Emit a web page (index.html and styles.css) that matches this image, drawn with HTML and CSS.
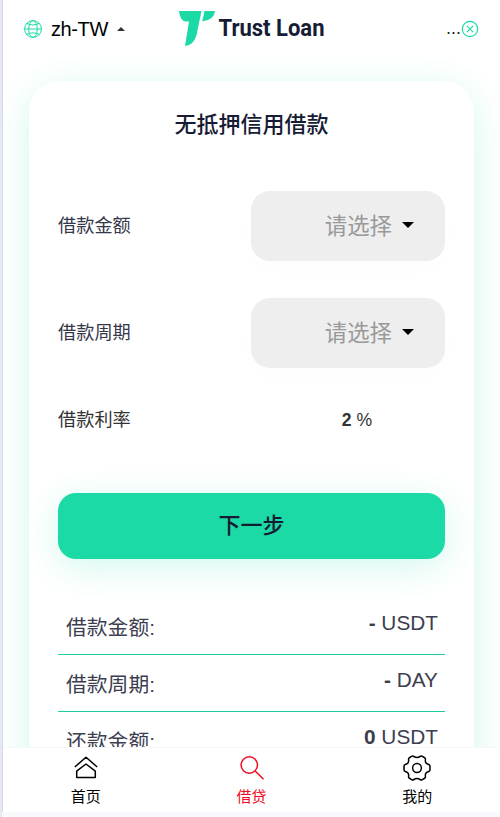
FILE: index.html
```html
<!DOCTYPE html>
<html lang="zh-CN">
<head>
  <meta charset="UTF-8" />
  <meta name="viewport" content="width=device-width, initial-scale=1.0"/>
  <title>Trust Loan</title>
  <link rel="stylesheet" href="styles.css">
</head>
<body>

<div class="app">
  <header class="topbar">
    <div class="lang">
      <svg class="globe" viewBox="0 0 18 18" width="18" height="18">
        <circle cx="9" cy="9" r="8.4"/>
        <ellipse cx="9" cy="9" rx="4.3" ry="8.4"/>
        <path d="M.6 9h16.8M2.8 3.6q6.2 3 12.4 0M2.8 14.4q6.2-3 12.4 0"/>
      </svg>
      <span class="lang-name">zh-TW</span>
      <span class="arrow-up"></span>
    </div>
    <svg class="logo" viewBox="0 0 148 38" width="148" height="38">
      <path class="mark" d="M1 1H23.5L18.5 25Q16 35 7 36L11 11.5H8Q2 11 1 1Z"/>
      <path class="mark" d="M26.5 1H37Q36 10 25 11.2H24.3Z"/>
      <text x="40.5" y="26" textLength="106" lengthAdjust="spacingAndGlyphs">Trust Loan</text>
    </svg>
    <div class="close">
      <span>...</span>
      <svg viewBox="0 0 18 18" width="18" height="18">
        <circle cx="9" cy="9" r="7.7"/>
        <path d="M5.9 5.9l6.2 6.2M12.1 5.9l-6.2 6.2"/>
      </svg>
    </div>
  </header>

  <main class="content">
    <div class="card">
      <h2>无抵押信用借款</h2>
      <div class="form-group">
        <label>借款金额</label>
        <div class="select"><span>请选择</span><i class="arrow-down"></i></div>
      </div>
      <div class="form-group">
        <label>借款周期</label>
        <div class="select"><span>请选择</span><i class="arrow-down"></i></div>
      </div>
      <div class="form-group rate">
        <label>借款利率</label>
        <div class="rate-value"><b>2</b> %</div>
      </div>
      <button class="next">下一步</button>
      <ul class="summary">
        <li><span>借款金额:</span><div><b>-</b> USDT</div></li>
        <li><span>借款周期:</span><div><b>-</b> DAY</div></li>
        <li><span>还款金额:</span><div><b>0</b> USDT</div></li>
      </ul>
    </div>
  </main>

  <nav class="tabbar">
    <a class="tab">
      <svg viewBox="0 0 28 28" width="28" height="28">
        <path d="M2.8 13L14 3.2 25.2 13M4.7 17.2L14 10l9.3 7.2v6.3H4.7z"/>
      </svg>
      <span>首页</span>
    </a>
    <a class="tab active">
      <svg viewBox="0 0 28 28" width="28" height="28">
        <circle cx="11.3" cy="11" r="8.2"/>
        <path d="M17.2 17l8.3 8.3"/>
      </svg>
      <span>借贷</span>
    </a>
    <a class="tab">
      <svg viewBox="0 0 28 28" width="28" height="28">
        <path d="M9 2.2C10.5 1.3 11 3.5 14 3.5S17.5 1.3 19 2.2L22 4C23.2 5 21.6 6.3 22.8 8.6S26.9 9.8 27 12V16C26.9 18.2 24 17.1 22.8 19.4S23.2 23 22 24L19 25.8C17.5 26.7 17 24.5 14 24.5S10.5 26.7 9 25.8L6 24C4.8 23 6.4 21.7 5.2 19.4S1.1 18.2 1 16V12C1.1 9.8 4 10.9 5.2 8.6S4.8 5 6 4Z"/>
        <circle cx="14" cy="14" r="4.4"/>
      </svg>
      <span>我的</span>
    </a>
  </nav>
</div>

</body>
</html>
```
FILE: styles.css
```css
* {
  box-sizing: border-box;
}
body {
  margin: 0;
  height: 817px;
  overflow: hidden;
  padding-bottom: 5px;
  background: #f8f9fd;
  border-left: 2px solid #e4e9f2;
  font-family: "Liberation Sans", "Noto Sans CJK SC", sans-serif;
}
.app {
  height: 812px;
  display: flex;
  flex-direction: column;
  background: #fff;
  border-left: 1px solid #d5d9e2;
}
svg {
  display: block;
  fill: none;
}
.topbar {
  height: 57px;
  flex: none;
  display: grid;
  grid-template-columns: 155px 1fr auto;
  align-items: center;
  padding: 0 21px 0 21px;
}
.topbar .logo {
  margin-left: -1px;
  overflow: visible;
}
.lang {
  display: flex;
  align-items: center;
}
.globe {
  stroke: #1cdaa6;
  stroke-width: 1;
}
.lang-name {
  width: 58px;
  margin-left: 9px;
  padding-top: 1px;
  white-space: nowrap;
  font-size: 20px;
  letter-spacing: -0.4px;
  color: #000;
}
.arrow-up {
  margin-left: 8px;
  border: 4px solid transparent;
  border-top: 0;
  border-bottom-color: #333;
}
.mark {
  fill: #1cdaa6;
}
.logo text {
  fill: #171c35;
  font-family: Roboto, sans-serif;
  font-size: 23px;
  font-weight: bold;
}
.close {
  display: flex;
  align-items: center;
  font-size: 18px;
  color: #222;
}
.close span {
  padding-bottom: 1px;
}
.close svg {
  stroke: #1cdaa6;
  stroke-width: 1.2;
}
.content {
  flex: 1;
  min-height: 0;
  overflow: hidden;
  padding: 24px 26px 0;
}
.card {
  height: 900px;
  padding: 24px 29px;
  border-radius: 30px;
  background: #fff;
  box-shadow: 0 8px 36px rgba(30, 219, 168, 0.2);
}
h2 {
  margin: 0 0 47px;
  padding-top: 1px;
  font-size: 22px;
  font-weight: 500;
  line-height: 38px;
  height: 39px;
  text-align: center;
  color: #171c35;
}
.form-group {
  display: flex;
  align-items: center;
  justify-content: space-between;
  height: 70px;
  margin-bottom: 37px;
  color: #36384a;
}
.form-group + .form-group {
  margin-bottom: 36px;
}
label {
  padding-bottom: 5px;
  font-size: 18.2px;
}
.select {
  width: 194px;
  height: 70px;
  display: flex;
  align-items: center;
  justify-content: flex-end;
  padding-right: 31px;
  border-radius: 19px;
  background: #eee;
  box-shadow: 0 8px 24px rgba(0, 0, 0, 0.01);
  font-size: 22.4px;
  color: #999;
}
.select span {
  padding-bottom: 5px;
}
.arrow-down {
  margin: 0 0 2px 10px;
  border: 6px solid transparent;
  border-bottom: 0;
  border-top-color: #000;
}
.form-group + .form-group.rate {
  height: 32px;
  margin-bottom: 57px;
  color: #333;
}
.rate label {
  padding-bottom: 4px;
}
.rate-value {
  width: 176px;
  text-align: center;
  font-size: 17.6px;
}
.next {
  display: block;
  width: 100%;
  height: 66px;
  padding: 0 0 7px;
  border: none;
  border-radius: 18px;
  background: #1cdaa6;
  box-shadow: 0 8px 36px rgba(30, 219, 168, 0.2);
  font-family: inherit;
  font-size: 22px;
  font-weight: 500;
  color: #171c35;
}
.summary {
  list-style: none;
  margin: 39px 0 0;
  padding: 0;
}
.summary li {
  display: flex;
  justify-content: space-between;
  height: 57px;
  padding: 8px 7px 0 8px;
  border-bottom: 1px solid #1fcda1;
  font-size: 20.8px;
  line-height: 34px;
  color: #3c3e50;
}
.summary span {
  padding-top: 5px;
}
.tabbar {
  display: flex;
  flex: none;
  height: 65px;
  border-top: 1px solid #f6f7f8;
  background: #fff;
}
.tab {
  flex: 1;
  display: flex;
  flex-direction: column;
  align-items: center;
  padding-top: 6px;
  font-size: 15px;
  line-height: 29px;
  color: #000;
}
.tab svg {
  flex: none;
  stroke: currentColor;
  stroke-width: 1.5;
  stroke-linejoin: round;
}
.tab.active {
  color: #ee0a24;
}
```
